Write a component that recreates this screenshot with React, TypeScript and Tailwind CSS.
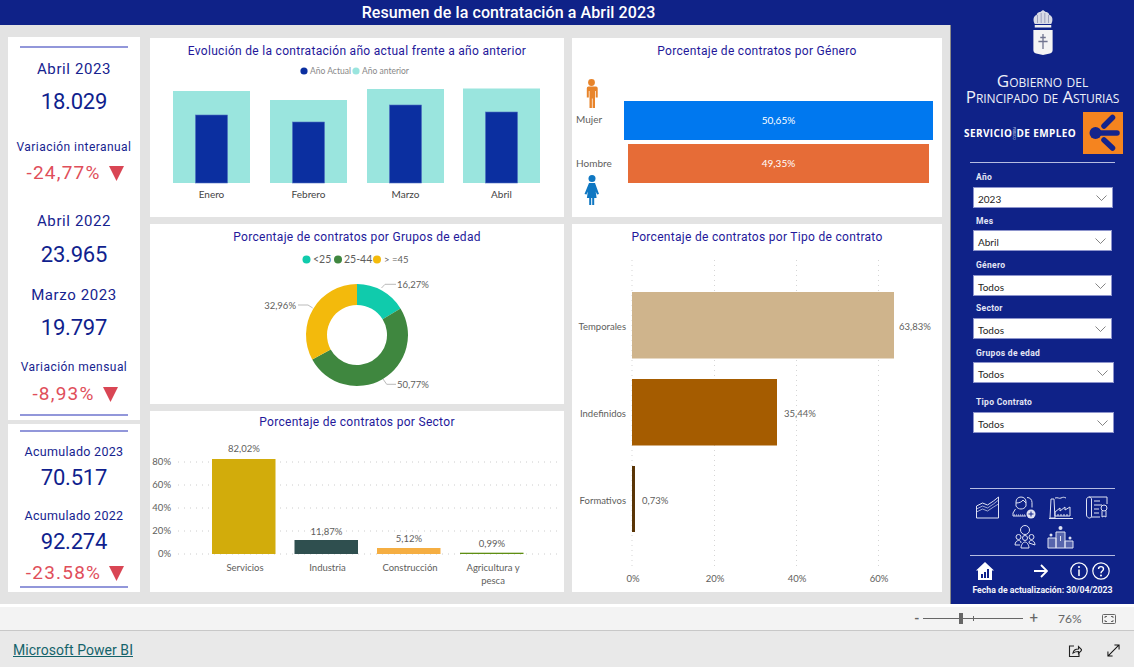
import React from 'react';

const din = "font-['Roboto',sans-serif]";
const seg = "Lato, sans-serif";

const Hr = ({ className }: { className: string }) => (
  <div className={`mx-auto h-[2px] w-[108px] bg-[#9297da] ${className}`} />
);

const KpiLabel = ({ children, className }: { children: React.ReactNode; className: string }) => (
  <div className={`h-5 whitespace-nowrap text-center leading-5 text-[#16238f] ${className}`}>{children}</div>
);

const KpiValue = ({ children, className }: { children: React.ReactNode; className: string }) => (
  <div className={`h-7 text-center text-[22px] leading-7 tracking-[-0.2px] text-[#101f8e] ${className}`}>{children}</div>
);

const KpiDelta = ({ children, className }: { children: React.ReactNode; className: string }) => (
  <div className={`flex h-6 items-center justify-center gap-[8px] pl-[2px] text-[19px] leading-6 tracking-[1.2px] text-[#e04e5a] ${className}`}>
    <span>{children}</span>
    <svg width="15" height="15" viewBox="0 0 15 15"><path d="M0 0h15L7.5 15z" fill="#d94654" /></svg>
  </div>
);

const Card = ({ className, title, titleClass = 'pt-[3px]', children }: { className: string; title: string; titleClass?: string; children: React.ReactNode }) => (
  <div className={`flex flex-col bg-white ${className}`}>
    <div className={`h-[26px] text-center text-[12px] leading-[20px] tracking-[0.3px] text-[#24189a] ${titleClass}`}>{title}</div>
    {children}
  </div>
);

const ChartText = ({ x, y, anchor = 'middle', fill = '#605e5c', size = 9.5, children }: { x: number; y: number; anchor?: 'middle' | 'start' | 'end'; fill?: string; size?: number; children: React.ReactNode }) => (
  <text x={x} y={y} textAnchor={anchor} fill={fill} fontSize={size} fontFamily={seg}>{children}</text>
);

const months = [
  { name: 'Enero', x: 173, prev: 91, cur: 115 },
  { name: 'Febrero', x: 270, prev: 100, cur: 122 },
  { name: 'Marzo', x: 367, prev: 89, cur: 105 },
  { name: 'Abril', x: 463, prev: 88.5, cur: 112 }
];

const EvolutionChart = () => (
  <svg viewBox="150 64 414 153" className="h-[153px] w-[414px]">
    <circle cx="304" cy="71" r="3.6" fill="#0b2fa0" />
    <ChartText x={310} y={74} anchor="start" fill="#888" size={8.5}>Año Actual</ChartText>
    <circle cx="356" cy="71" r="3.6" fill="#9ae5de" />
    <ChartText x={362} y={74} anchor="start" fill="#888" size={8.5}>Año anterior</ChartText>
    {months.map(m => (
      <g key={m.name}>
        <rect x={m.x} y={m.prev} width="77" height={183 - m.prev} fill="#9ae5de" />
        <rect x={m.x + 22.5} y={m.cur} width="32" height={183 - m.cur} fill="#0b2fa0" stroke="#4f6fc0" strokeWidth="0.6" />
        <ChartText x={m.x + 38.5} y={198} fill="#444" size={10}>{m.name}</ChartText>
      </g>
    ))}
  </svg>
);

const donutPath = (from: number, to: number) => {
  const pt = (p: number, r: number) => {
    const a = (p / 100) * Math.PI * 2 - Math.PI / 2;
    return `${357 + r * Math.cos(a)} ${335 + r * Math.sin(a)}`;
  };
  const large = to - from > 50 ? 1 : 0;
  return `M${pt(from, 51)}A51 51 0 ${large} 1 ${pt(to, 51)}L${pt(to, 30)}A30 30 0 ${large} 0 ${pt(from, 30)}Z`;
};

const AgeChart = () => (
  <svg viewBox="150 250 414 154" className="h-[154px] w-[414px]">
    <circle cx="306.5" cy="259.5" r="4" fill="#10cbac" />
    <ChartText x={313} y={263} anchor="start" size={10.5}>{'<25'}</ChartText>
    <circle cx="338" cy="259.5" r="4" fill="#3f873f" />
    <ChartText x={344} y={263} anchor="start" size={10.5}>25-44</ChartText>
    <circle cx="377" cy="259.5" r="4" fill="#f3ba0c" />
    <ChartText x={384} y={263} anchor="start" size={9.5}>{'> =45'}</ChartText>
    <path d={donutPath(0, 16.27)} fill="#10cbac" />
    <path d={donutPath(16.27, 67.04)} fill="#3f873f" />
    <path d={donutPath(67.04, 100)} fill="#f3ba0c" />
    <path d="M381.500 288l3.500-3.700h11M383 379l3.700 5.300H396M298 305h10l4.700 3" fill="none" stroke="#bbb" strokeWidth="1" />
    <ChartText x={397} y={288} anchor="start">16,27%</ChartText>
    <ChartText x={397} y={388} anchor="start">50,77%</ChartText>
    <ChartText x={296} y={309} anchor="end">32,96%</ChartText>
  </svg>
);

const sectors = [
  { name: 'Servicios', x: 212, top: 459, label: 452, color: '#d2ac0b', value: '82,02%' },
  { name: 'Industria', x: 294.5, top: 540, label: 534.5, color: '#2f4f4f', value: '11,87%' },
  { name: 'Construcción', x: 377, top: 548, label: 541.5, color: '#f5ae42', value: '5,12%' },
  { name: 'Agricultura y', x: 460, top: 552.7, label: 546.5, color: '#5f8e12', value: '0,99%' }
];

const SectorChart = () => (
  <svg viewBox="150 437 414 155" className="h-[155px] w-[414px]">
    {[[462, '80%'], [485, '60%'], [508, '40%'], [531, '20%'], [554, '0%']].map(([y, l]) => (
      <g key={l as string}>
        <line x1="178" x2="560" y1={y as number} y2={y as number} stroke="#ccc" strokeWidth="1" strokeDasharray="1 5" />
        <ChartText x={171} y={(y as number) + 3} anchor="end">{l}</ChartText>
      </g>
    ))}
    {sectors.map(s => (
      <g key={s.name}>
        <rect x={s.x} y={s.top} width="63.5" height={554 - s.top} fill={s.color} />
        <ChartText x={s.x + 32} y={s.label}>{s.value}</ChartText>
        <ChartText x={s.x + 33} y={571}>{s.name}</ChartText>
      </g>
    ))}
    <ChartText x={493} y={584}>pesca</ChartText>
  </svg>
);

const GenderChart = () => (
  <div className="flex h-[153px] flex-col">
    <svg viewBox="576 64 30 44" className="ml-0 h-[44px] w-[30px] shrink-0">
      <circle cx="591.5" cy="82.5" r="3.4" fill="#e8842a" />
      <path d="M587 86.5h9a1.7 1.7 0 0 1 1.7 1.7v9.3h-2v-6.5h-.7V108h-2.4v-9.5h-.7V108h-2.4V91h-.7v6.5h-2v-9.3a1.7 1.7 0 0 1 1.7-1.7z" fill="#e8842a" />
    </svg>
    <div className="flex h-[43px] items-center" />
    <svg viewBox="576 172 30 36" className="mt-[20px] h-[36px] w-[30px] shrink-0">
      <circle cx="592" cy="179.5" r="3.5" fill="#0f77c2" />
      <path d="M589 184h6l4 11-2 .5-1.3-3 .9 6.5h-2.4v7h-2v-7h-1v7h-2v-7h-2.3l.9-6.5-1.3 3-2-.5z" fill="#0f77c2" />
    </svg>
  </div>
);

const Crest = () => (
  <svg viewBox="0 0 24 46" preserveAspectRatio="none" className="h-[46px] w-[22px]">
    <path d="M3 15c-2-3-2-8 2-9 1-3 3-3 4-3l3-2 3 2c1 0 3 0 4 3 4 1 4 6 2 9z" fill="#d9dbe6" />
    <path d="M6 6v8M10 4v10M14 4v10M18 6v8" stroke="#8b8fb0" strokeWidth="0.8" />
    <rect x="3" y="16" width="18" height="2.5" fill="#f2f2f2" />
    <path d="M1.5 21h21v20c0 2-1 3-3 3.5l-7.5 1.5-7.5-1.5c-2-.5-3-1.500-3-3.500z" fill="#f4f4f4" />
    <path d="M12 25v15M9 28.500h6M7 32.500h10" stroke="#70748f" strokeWidth="1.4" />
  </svg>
);

const OrangeLogo = () => (
  <svg viewBox="0 0 40 42" className="h-[42px] w-[40px]">
    <rect width="40" height="42" fill="#f5841f" />
    <g stroke="#14248c" strokeWidth="5.500" strokeLinecap="round">
      <path d="M21 14l8.500-8.500M14 21h20M21 28l8.500 8" />
    </g>
    <circle cx="12.500" cy="21" r="6" fill="#14248c" />
  </svg>
);

const filters = [
  { label: 'Año', value: '2023', labelClass: 'mt-[7px]', boxClass: 'mt-[3px] w-[140px]' },
  { label: 'Mes', value: 'Abril', labelClass: 'mt-[6px]', boxClass: 'mt-[2px] w-[139px]' },
  { label: 'Género', value: 'Todos', labelClass: 'mt-[7px]', boxClass: 'mt-[3px] w-[139px]' },
  { label: 'Sector', value: 'Todos', labelClass: 'mt-[5px]', boxClass: 'mt-[3px] w-[139px]' },
  { label: 'Grupos de edad', value: 'Todos', labelClass: 'mt-[7px]', boxClass: 'mt-[2px] w-[141px]' },
  { label: 'Tipo Contrato', value: 'Todos', labelClass: 'mt-[12px]', boxClass: 'mt-[3px] w-[141px]' }
];

const Filter = ({ label, value, labelClass, boxClass }: { label: string; value: string; labelClass: string; boxClass: string }) => (
  <>
    <div className={`h-[14px] pl-[3px] text-[8.5px] font-bold leading-[14px] tracking-[0.3px] text-[#e4e6f5] ${labelClass}`}>{label}</div>
    <div className={`flex h-[21px] items-center justify-between border border-[#8d94cc] bg-white pl-[4px] pr-[5px] text-[10px] text-[#252423] ${boxClass}`} style={{ fontFamily: seg }}>
      <span className="pt-[3px]">{value}</span>
      <svg width="11" height="6" viewBox="0 0 11 6"><path d="M.5.500l5 5 5-5" fill="none" stroke="#666" strokeWidth="0.8" /></svg>
    </div>
  </>
);

const iconStroke = { fill: 'none', stroke: '#dfe2f3', strokeWidth: 1 };

const NavIcons = () => (
  <>
    <div className="ml-[25px] mt-[7px] flex h-[23px] gap-[13px]">
      <svg viewBox="0 0 23 23" className="h-[23px] w-[23px]" {...iconStroke}>
        <path d="M.500 10l6-3 5 2 6-4 5-4v21H.500z" />
        <path d="M.500 13l6-3 5 2 6-4 5-4M.500 16l6-3 5 2 6-4 5-3" strokeWidth="0.7" />
      </svg>
      <svg viewBox="0 0 24 23" className="h-[23px] w-[24px]" {...iconStroke}>
        <path d="M4 10V6c0-3 2-5 5-5s5 2 5 5v4c-1 2-3 3-5 3s-4-1-5-3zM4 7c3 0 6-1 7-3 1 1 2 2 3 3" />
        <path d="M15 1.500c3 0 5 2 5 5v5M3.500 13L1 17v3h13" />
        <path d="M2 19h11" strokeDasharray="1 1" />
        <circle cx="19" cy="18" r="4.500" fill="#dfe2f3" stroke="none" />
        <path d="M19 15.500v5M16.500 18h5" stroke="#10228a" />
      </svg>
      <svg viewBox="0 0 24 23" className="h-[23px] w-[24px]" {...iconStroke}>
        <path d="M1 22l1-19h3l1 19zM6 16l5-4v3l5-4v3l5-3v9H6zM0 22.500h24M6 2c3-1 4 1 6 0s3-1 5 0" />
        <path d="M9 18v2M12 18v2M15 18v2M18 18v2" />
      </svg>
      <svg viewBox="0 0 23 23" className="h-[23px] w-[23px]" {...iconStroke}>
        <path d="M3 1h18v7M3 1C1 1 .500 3 .500 4v15c0 2 2 3 3 3s2-1 2-2V3C5.500 2 4 1 3 1zM5 21h9" />
        <path d="M8 5h6M8 9h8M8 13h5M8 17h5" />
        <circle cx="18" cy="12" r="3" />
        <path d="M16 15v6l2-1 2 1v-6" />
      </svg>
    </div>
    <div className="ml-[63px] mt-[6px] flex h-[24px] gap-[11px]">
      <svg viewBox="0 0 22 24" className="h-[24px] w-[22px]" {...iconStroke}>
        <circle cx="11" cy="5" r="4.500" />
        <circle cx="4.500" cy="12" r="2.500" />
        <circle cx="11" cy="13" r="2.500" />
        <circle cx="17.500" cy="12" r="2.500" />
        <path d="M1 20c0-3 2-4.500 3.500-4.500S7 16 7 18M15 18c0-2 1-2.500 2.500-2.500S21 17 21 20zM1 20h5M7 23c0-3 2-6 4-6s4 3 4 6z" />
      </svg>
      <svg viewBox="0 0 27 24" className="h-[24px] w-[27px]" {...iconStroke}>
        <circle cx="13.500" cy="3" r="2" fill="#dfe2f3" stroke="none" />
        <circle cx="4" cy="10" r="1.500" fill="#dfe2f3" stroke="none" />
        <circle cx="23" cy="13" r="1.500" fill="#dfe2f3" stroke="none" />
        <path d="M9 7h9v16H9zM1 13h8v10H1zM18 16h8v7h-8z" fill="#dfe2f3" fillOpacity="0.35" />
        <path d="M13.500 11v5" />
      </svg>
    </div>
  </>
);

const BottomNav = () => (
  <div className="ml-[25px] mt-[6px] flex h-[18px] items-center">
    <svg viewBox="0 0 18 18" className="h-[18px] w-[18px]">
      <path d="M9 0l9 8.500h-2V18H2V8.500H0z" fill="#fff" />
      <path d="M5 12h2v4H5zM8 10h2v6H8zM11 7h2v9h-2z" fill="#10228a" />
    </svg>
    <svg viewBox="0 0 14 14" className="ml-[40px] h-[14px] w-[14px]" fill="none" stroke="#fff" strokeWidth="1.800">
      <path d="M0 7h13M7 1l6 6-6 6" />
    </svg>
    <svg viewBox="0 0 18 18" className="ml-[22px] h-[18px] w-[18px]" fill="none" stroke="#fff" strokeWidth="1.200">
      <circle cx="9" cy="9" r="8.200" />
      <path d="M9 7.500v6.500" strokeWidth="1.500" />
      <circle cx="9" cy="5" r="1" fill="#fff" stroke="none" />
    </svg>
    <svg viewBox="0 0 18 18" className="ml-[4px] h-[18px] w-[18px]" fill="none" stroke="#fff" strokeWidth="1.200">
      <circle cx="9" cy="9" r="8.200" />
      <path d="M6.500 7c0-3.200 5-3.200 5 0 0 2-2.500 2-2.500 4.200" strokeWidth="1.400" />
      <circle cx="9" cy="13.500" r="1" fill="#fff" stroke="none" />
    </svg>
  </div>
);

const Sidebar = () => (
  <aside className={`flex h-[604px] w-[183px] shrink-0 flex-col bg-[#0f2288] text-white ${din}`}>
    <div className="mt-[9px] flex justify-center"><Crest /></div>
    <div className="mt-[18px] text-center text-[17px] leading-4 text-[#eef0f8] [font-variant:small-caps]" style={{ fontFamily: "'Open Sans', sans-serif" }}>
      <div>Gobierno del</div>
      <div className="whitespace-nowrap tracking-[-0.1px]">Principado de Asturias</div>
    </div>
    <div className="ml-[13px] mt-[7px] flex h-[42px] items-center">
      <div className="flex w-[119px] items-center text-[10px] font-bold tracking-[0.4px]" style={{ fontFamily: "'Open Sans', sans-serif" }}>
        <span>SERVICIO</span>
        <span className="mx-[1px] h-[13px] w-[4px] overflow-hidden text-[3px] font-normal leading-[4px] tracking-normal [writing-mode:vertical-rl]">PÚBLICO</span>
        <span>DE EMPLEO</span>
      </div>
      <OrangeLogo />
    </div>
    <div className="ml-[19px] mt-[8px] h-[1px] w-[145px] bg-[#b6bce0]" />
    <div className="ml-[22px]">
      {filters.map(f => <Filter key={f.label} {...f} />)}
    </div>
    <div className="ml-[19px] mt-[55px] h-[1px] w-[145px] bg-[#b6bce0]" />
    <NavIcons />
    <div className="ml-[19px] mt-[6px] h-[1px] w-[145px] bg-[#b6bce0]" />
    <BottomNav />
    <div className="mt-[4px] h-[12px] whitespace-nowrap text-center text-[8.7px] font-bold leading-[12px] text-[#f4f5fb]">Fecha de actualización: 30/04/2023</div>
  </aside>
);

const TipoChart = () => (
  <svg viewBox="572 250 370 342" className="h-[342px] w-[370px]">
    {[632, 714.500, 796.500, 878.500].map(x => (
      <line key={x} x1={x} x2={x} y1="260" y2="568" stroke="#d5d5d5" strokeWidth="1" strokeDasharray="1 4" />
    ))}
    <rect x="632" y="292" width="262" height="66.500" fill="#cfb48c" />
    <rect x="632" y="379" width="145" height="66.500" fill="#a55c00" />
    <rect x="632" y="466" width="3" height="66" fill="#5a3506" />
    <ChartText x={626} y={330} anchor="end">Temporales</ChartText>
    <ChartText x={626} y={417} anchor="end">Indefinidos</ChartText>
    <ChartText x={626} y={504} anchor="end">Formativos</ChartText>
    <ChartText x={899} y={330} anchor="start">63,83%</ChartText>
    <ChartText x={784} y={417} anchor="start">35,44%</ChartText>
    <ChartText x={642} y={504} anchor="start">0,73%</ChartText>
    {[[633, '0%'], [715, '20%'], [797, '40%'], [879, '60%']].map(([x, l]) => (
      <ChartText key={l as string} x={x as number} y={582}>{l}</ChartText>
    ))}
  </svg>
);

export default function App() {
  return (
    <div className={`flex h-[667px] w-[1134px] flex-col overflow-hidden bg-[#eaeaea] ${din}`}>
      <div className="flex h-[604px]">
        <div className="flex w-[951px] flex-col">
          <header className="h-[25px] bg-[#0f2288] pl-[66px] text-center text-[16px] font-medium leading-[26px] tracking-[0.1px] text-white">
            Resumen de la contratación a Abril 2023
          </header>
          <main className="flex flex-1 border-r border-[#8a8a8a] bg-[#e3e3e3] pl-2 pt-3">
            <div className="w-[132px]">
              <section className="h-[383px] overflow-hidden bg-white pt-[9px]">
                <Hr className="" />
                <KpiLabel className="mt-[11px] text-[15px] tracking-[0.6px]">Abril 2023</KpiLabel>
                <KpiValue className="mt-[9px]">18.029</KpiValue>
                <div className="mt-[22px] h-[18px] whitespace-nowrap text-center text-[12px] leading-[18px] tracking-[0.45px] text-[#16238f]">Variación interanual</div>
                <KpiDelta className="mt-[5px]">-24,77%</KpiDelta>
                <KpiLabel className="mt-[26px] text-[15px] tracking-[0.6px]">Abril 2022</KpiLabel>
                <KpiValue className="mt-[10px]">23.965</KpiValue>
                <KpiLabel className="mt-[16px] text-[15px] tracking-[0.6px]">Marzo 2023</KpiLabel>
                <KpiValue className="mt-[9px]">19.797</KpiValue>
                <div className="mt-[16px] h-[18px] whitespace-nowrap text-center text-[12px] leading-[18px] tracking-[0.45px] text-[#16238f]">Variación mensual</div>
                <KpiDelta className="mt-[6px]">-8,93%</KpiDelta>
                <Hr className="mt-[8px]" />
              </section>
              <section className="mt-1 h-[168px] overflow-hidden bg-white pt-[6px]">
                <Hr className="" />
                <KpiLabel className="mt-[10px] text-[12.5px] tracking-[0.3px]">Acumulado 2023</KpiLabel>
                <KpiValue className="mt-[2px]">70.517</KpiValue>
                <KpiLabel className="mt-[14px] text-[12.5px] tracking-[0.3px]">Acumulado 2022</KpiLabel>
                <KpiValue className="mt-[2px]">92.274</KpiValue>
                <KpiDelta className="mt-[5px]">-23.58%</KpiDelta>
                <Hr className="mt-[1px]" />
              </section>
            </div>
            <div className="ml-[10px] mt-[1px] flex w-[414px] flex-col gap-[7px]">
              <Card className="h-[179px]" title="Evolución de la contratación año actual frente a año anterior"><EvolutionChart /></Card>
              <Card className="h-[180px]" title="Porcentaje de contratos por Grupos de edad"><AgeChart /></Card>
              <Card className="h-[181px]" titleClass="pt-[1px]" title="Porcentaje de contratos por Sector"><SectorChart /></Card>
            </div>
            <div className="ml-[8px] mt-[1px] flex w-[370px] flex-col gap-[7px]">
              <Card className="h-[179px]" title="Porcentaje de contratos por Género">
                <div className="relative flex h-[153px] pl-[4px]" style={{ fontFamily: seg }}>
                  <GenderChart />
                  <span className="absolute left-[4px] top-[48px] text-[10px] text-[#605e5c]">Mujer</span>
                  <span className="absolute left-[4px] top-[92px] text-[10px] text-[#605e5c]">Hombre</span>
                  <div className="flex flex-col gap-[4px] pt-[37px] text-[10px] text-white">
                    <div className="ml-[18px] flex h-[39px] w-[309px] items-center justify-center bg-[#0078ef]">50,65%</div>
                    <div className="ml-[22px] flex h-[39px] w-[301px] items-center justify-center bg-[#e66c37]">49,35%</div>
                  </div>
                </div>
              </Card>
              <Card className="h-[368px]" title="Porcentaje de contratos por Tipo de contrato"><TipoChart /></Card>
            </div>
          </main>
        </div>
        <Sidebar />
      </div>
      <div className="flex h-[27px] items-center justify-end border-b border-t-[3px] border-b-[#c8c8c8] border-t-white bg-[#f3f3f3] pr-[18px] text-[#666]">
        <span className="text-[13px] font-bold leading-none">-</span>
        <div className="relative ml-[4px] h-[1px] w-[100px] bg-[#666]">
          <span className="absolute left-[36px] top-[-5px] h-[11px] w-[4px] bg-[#666]" />
          <span className="absolute left-[50px] top-[-2px] h-[5px] w-[1px] bg-[#666]" />
        </div>
        <span className="ml-[6px] text-[15px] leading-none">+</span>
        <span className="ml-[20px] w-[23px] text-[12px]" style={{ fontFamily: seg }}>76%</span>
        <svg viewBox="0 0 14 10" className="ml-[21px] h-[10px] w-[14px]" fill="none" stroke="#666" strokeWidth="1">
          <rect x="0.500" y="0.500" width="13" height="9" rx="1" />
          <path d="M3 4V2.500h2M11 4V2.500H9M3 6v1.500h2M11 6v1.500H9" />
        </svg>
      </div>
      <footer className="flex h-[36px] items-center bg-[#e9e9e9] pl-[13px] pr-[14px] pt-[3px]">
        <a className="text-[14px] tracking-[0.05px] text-[#14636b] underline">Microsoft Power BI</a>
        <svg viewBox="0 0 14 14" className="ml-auto h-[14px] w-[14px]" fill="none" stroke="#222" strokeWidth="1.100">
          <path d="M6 2H1.500v10.500h9.500V9M5 9c.5-3 3-4 5.500-4V2.500L14 6l-3.500 3.500V7.500C8.500 7.500 6.500 8 5 9z" />
        </svg>
        <svg viewBox="0 0 14 14" className="ml-[25px] h-[13px] w-[13px]" fill="none" stroke="#111" strokeWidth="1.100">
          <path d="M1 13L13 1M8 1h5v5M1 8v5h5" />
        </svg>
      </footer>
    </div>
  );
}
